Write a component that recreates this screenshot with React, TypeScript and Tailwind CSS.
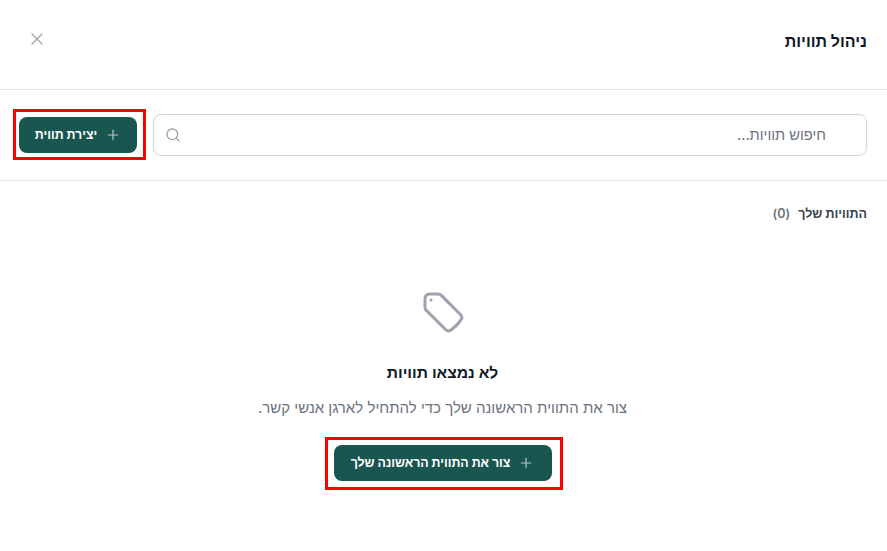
import React from 'react';
import { Plus, Search, X } from 'lucide-react';

const App: React.FC = () => {
  return (
    <div dir="rtl" className="h-[551px] w-[887px] overflow-hidden bg-white font-['Inter',sans-serif]">
      {/* Header */}
      <div className="flex h-[90px] items-start justify-between border-b border-[#e5e7eb] pt-[29px] pr-5 pl-[27px]">
        <h2 className="text-[16px] leading-[24px] font-bold text-[#111827]">ניהול תוויות</h2>
        <button className="text-[#9ca3af]">
          <X className="h-[20px] w-[20px]" strokeWidth={1.5} />
        </button>
      </div>

      {/* Toolbar */}
      <div className="flex h-[91px] items-center gap-4 border-b border-[#e5e7eb] pr-5 pl-[19px]">
        <div className="flex h-[42px] flex-1 items-center justify-between rounded-lg border border-[#d1d5db] pr-[40px] pl-[11px]">
          <span className="text-[14.7px] text-[#6b7280]">חיפוש תוויות...</span>
          <Search className="h-[16px] w-[16px] text-[#9ca3af]" />
        </div>
        <div className="relative">
          <button className="flex h-[36px] w-[118px] items-center justify-center gap-2 rounded-lg bg-[#1a5650] text-[12.4px] font-bold text-white">
            <Plus className="h-[16px] w-[16px] text-[#b5c8c6]" strokeWidth={1.75} />
            יצירת תווית
          </button>
          <div className="absolute -top-[8px] -right-[9px] -bottom-[7px] -left-[6px] border-[3px] border-[#f00]" />
        </div>
      </div>

      {/* Labels */}
      <div className="flex items-center gap-2 px-5 pt-[23px] text-[12.5px] leading-[20px] font-semibold">
        <span className="text-[#374151]">התוויות שלך</span>
        <span className="text-[#6b7280]">(0)</span>
      </div>

      {/* Empty state */}
      <div className="flex flex-col items-center pt-[64px] pr-[2px]">
        <svg className="h-[48px] w-[48px] text-[#9ca3af]" viewBox="0 0 24 24" fill="none" stroke="currentColor" strokeWidth={1.5} strokeLinecap="round" strokeLinejoin="round">
          <path d="M9.568 3H5.25A2.25 2.25 0 0 0 3 5.25v4.318c0 .597.237 1.17.659 1.591l9.581 9.581c.699.699 1.78.872 2.607.33a18.095 18.095 0 0 0 5.223-5.223c.542-.827.369-1.908-.33-2.607L11.16 3.66A2.25 2.25 0 0 0 9.568 3Z" />
          <path d="M6 6h.008v.008H6V6Z" />
        </svg>
        <h3 className="mt-[23px] text-[15.6px] leading-[28px] font-semibold text-[#111827]">לא נמצאו תוויות</h3>
        <p className="mt-[9px] text-[15px] leading-[24px] text-[#6b7280]">צור את התווית הראשונה שלך כדי להתחיל לארגן אנשי קשר.</p>
        <div className="relative mt-[25px]">
          <button className="flex h-[36px] w-[218px] items-center justify-center gap-2 rounded-lg bg-[#1a5650] text-[12.4px] font-bold text-white">
            <Plus className="h-[16px] w-[16px] text-[#b5c8c6]" strokeWidth={1.75} />
            צור את התווית הראשונה שלך
          </button>
          <div className="absolute -top-[8px] -right-[11px] -bottom-[9px] -left-[9px] border-[3px] border-[#f00]" />
        </div>
      </div>
    </div>
  );
};

export default App;
